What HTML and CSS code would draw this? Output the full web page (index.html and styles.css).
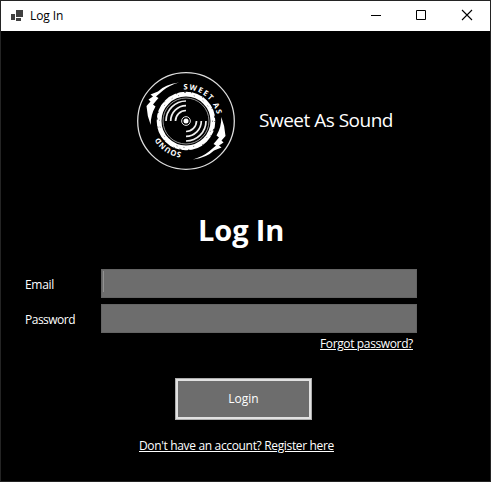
FILE: index.html
```html
<!DOCTYPE html>
<html lang="en">
<head>
<meta charset="utf-8">
<title>Log In</title>
<link rel="stylesheet" href="styles.css">
</head>
<body>
<div class="window">
  <header class="titlebar">
    <svg class="app-icon" width="14" height="14" viewBox="0 0 14 14" shape-rendering="crispEdges"><path fill="#3f3f3f" d="M6 1h7v7H6zM1 5h4v6H1zM6 9h5v3H6z"/></svg>
    <span class="caption">Log In</span>
    <div class="controls">
      <svg width="46" height="30" viewBox="0 0 46 30"><path d="M18 14.5h10" stroke="#000"/></svg>
      <svg width="46" height="30" viewBox="0 0 46 30"><path d="M17.5 9.5h9v9h-9z" fill="none" stroke="#000"/></svg>
      <svg width="46" height="30" viewBox="0 0 46 30"><path d="M17 9l10 10M27 9L17 19" stroke="#000" stroke-width="1.1"/></svg>
    </div>
  </header>
  <main class="content">
    <div class="brand">
      <svg class="logo" width="112" height="112" viewBox="0 0 112 112">
        <defs>
          <path id="top-arc" d="M24.5 56A31.5 31.5 0 0 1 87.5 56A31.5 31.5 0 0 1 24.5 56"/>
          <path id="bottom-arc" d="M87.5 56A31.5 31.5 0 0 1 24.5 56A31.5 31.5 0 0 1 87.5 56"/>
          <g id="side">
            <path fill="#fff" d="M49 17.6Q35 19.5 28 26.5L20.5 29.5L23 31.5L18.5 34.5L20.5 36.5L16.5 41Q17 51 20.7 60Q20.5 50 25.5 41.5L23 39.5L28.5 33L26 31.5L33 25.5Q39 20.5 49 17.6Z"/>
            <path fill="none" stroke="#eee" stroke-width="1.7" d="M36 56A20 20 0 0 1 56 36M40.7 56A15.3 15.3 0 0 1 56 40.7M45.5 56A10.5 10.5 0 0 1 56 45.5"/>
          </g>
        </defs>
        <circle cx="56" cy="56" r="48.3" fill="none" stroke="#ddd" stroke-width="1.3"/>
        <circle cx="56" cy="56" r="26.9" fill="none" stroke="#fff" stroke-width="4.8"/>
        <circle cx="56" cy="56" r="28.9" fill="none" stroke="#000" stroke-width=".9" stroke-dasharray="1 7 2 5 1 11 1 14"/>
        <circle cx="56" cy="56" r="26.5" fill="none" stroke="#555" stroke-width=".8" stroke-dasharray="1 9 1 6 1 15"/>
        <circle cx="56" cy="56" r="23" fill="none" stroke="#bbb" stroke-width=".8"/>
        <use href="#side"/>
        <use href="#side" transform="rotate(180 56 56)"/>
        <circle cx="56" cy="56" r="4.4" fill="none" stroke="#ddd"/>
        <circle cx="56" cy="56" r="2.5" fill="#fff"/>
        <text class="logo-text"><textPath href="#top-arc" startOffset="47" textLength="45">SWEET AS</textPath></text>
        <text class="logo-text"><textPath href="#bottom-arc" startOffset="54" textLength="28">SOUND</textPath></text>
      </svg>
      <span class="brand-name">Sweet As Sound</span>
    </div>
    <h1>Log In</h1>
    <form class="form">
      <label class="row"><span class="label email">Email</span><span class="field"><i class="caret"></i></span></label>
      <label class="row"><span class="label password">Password</span><span class="field"></span></label>
      <a class="link forgot">Forgot password?</a>
      <button class="login" type="button"><span>Login</span></button>
      <a class="link register">Don't have an account? Register here</a>
    </form>
  </main>
</div>
</body>
</html>
```

FILE: styles.css
```css
* { box-sizing: border-box; }
body { margin: 0; background: #000; font-family: "Open Sans", "Noto Sans", sans-serif; font-size: 12px; line-height: 16px; color: #fff; }
.window { width: 491px; height: 482px; border: 1px solid #242424; background: #000; overflow: hidden; }
.titlebar { display: flex; align-items: center; height: 30px; padding-left: 9px; background: #fff; color: #000; }
.app-icon { margin-right: 6px; }
.caption { letter-spacing: -0.1px; }
.controls { display: flex; margin-left: auto; margin-right: -1px; }
.content { padding-top: 34px; }
.brand { display: flex; align-items: center; height: 112px; padding-left: 129px; }
.logo-text { font: 700 7.6px "Open Sans", sans-serif; fill: #fff; }
.brand-name { margin: -2px 0 0 17px; font-size: 19px; line-height: 26px; letter-spacing: -0.5px; white-space: nowrap; }
h1 { margin: 33px 0 0 197px; font-size: 29px; line-height: 40px; letter-spacing: -0.1px; }
.form { display: flex; flex-direction: column; margin-top: 19px; padding-left: 24px; }
.row { display: flex; align-items: center; margin-bottom: 6px; }
.label { width: 76px; padding-top: 2px; }
.email { letter-spacing: -0.3px; }
.password { letter-spacing: -0.5px; }
.field { width: 316px; height: 29px; padding: 1px; background: #6d6d6d; border: 1px solid #646464; }
.caret { display: block; width: 1px; height: 21px; background: #929292; }
.link { text-decoration: underline; white-space: nowrap; text-underline-offset: 1px; letter-spacing: -0.37px; }
.forgot { align-self: flex-start; margin: -3px 0 0 295px; }
.login { width: 137px; height: 42px; margin: 26px 0 0 150px; padding: 0; background: #6d6d6d; border: 1px solid #adadad; box-shadow: inset 0 0 0 2px #e1e1e1; color: #fff; font: inherit; }
.register { align-self: flex-start; margin: 18px 0 0 114px; letter-spacing: -0.34px; }
```
